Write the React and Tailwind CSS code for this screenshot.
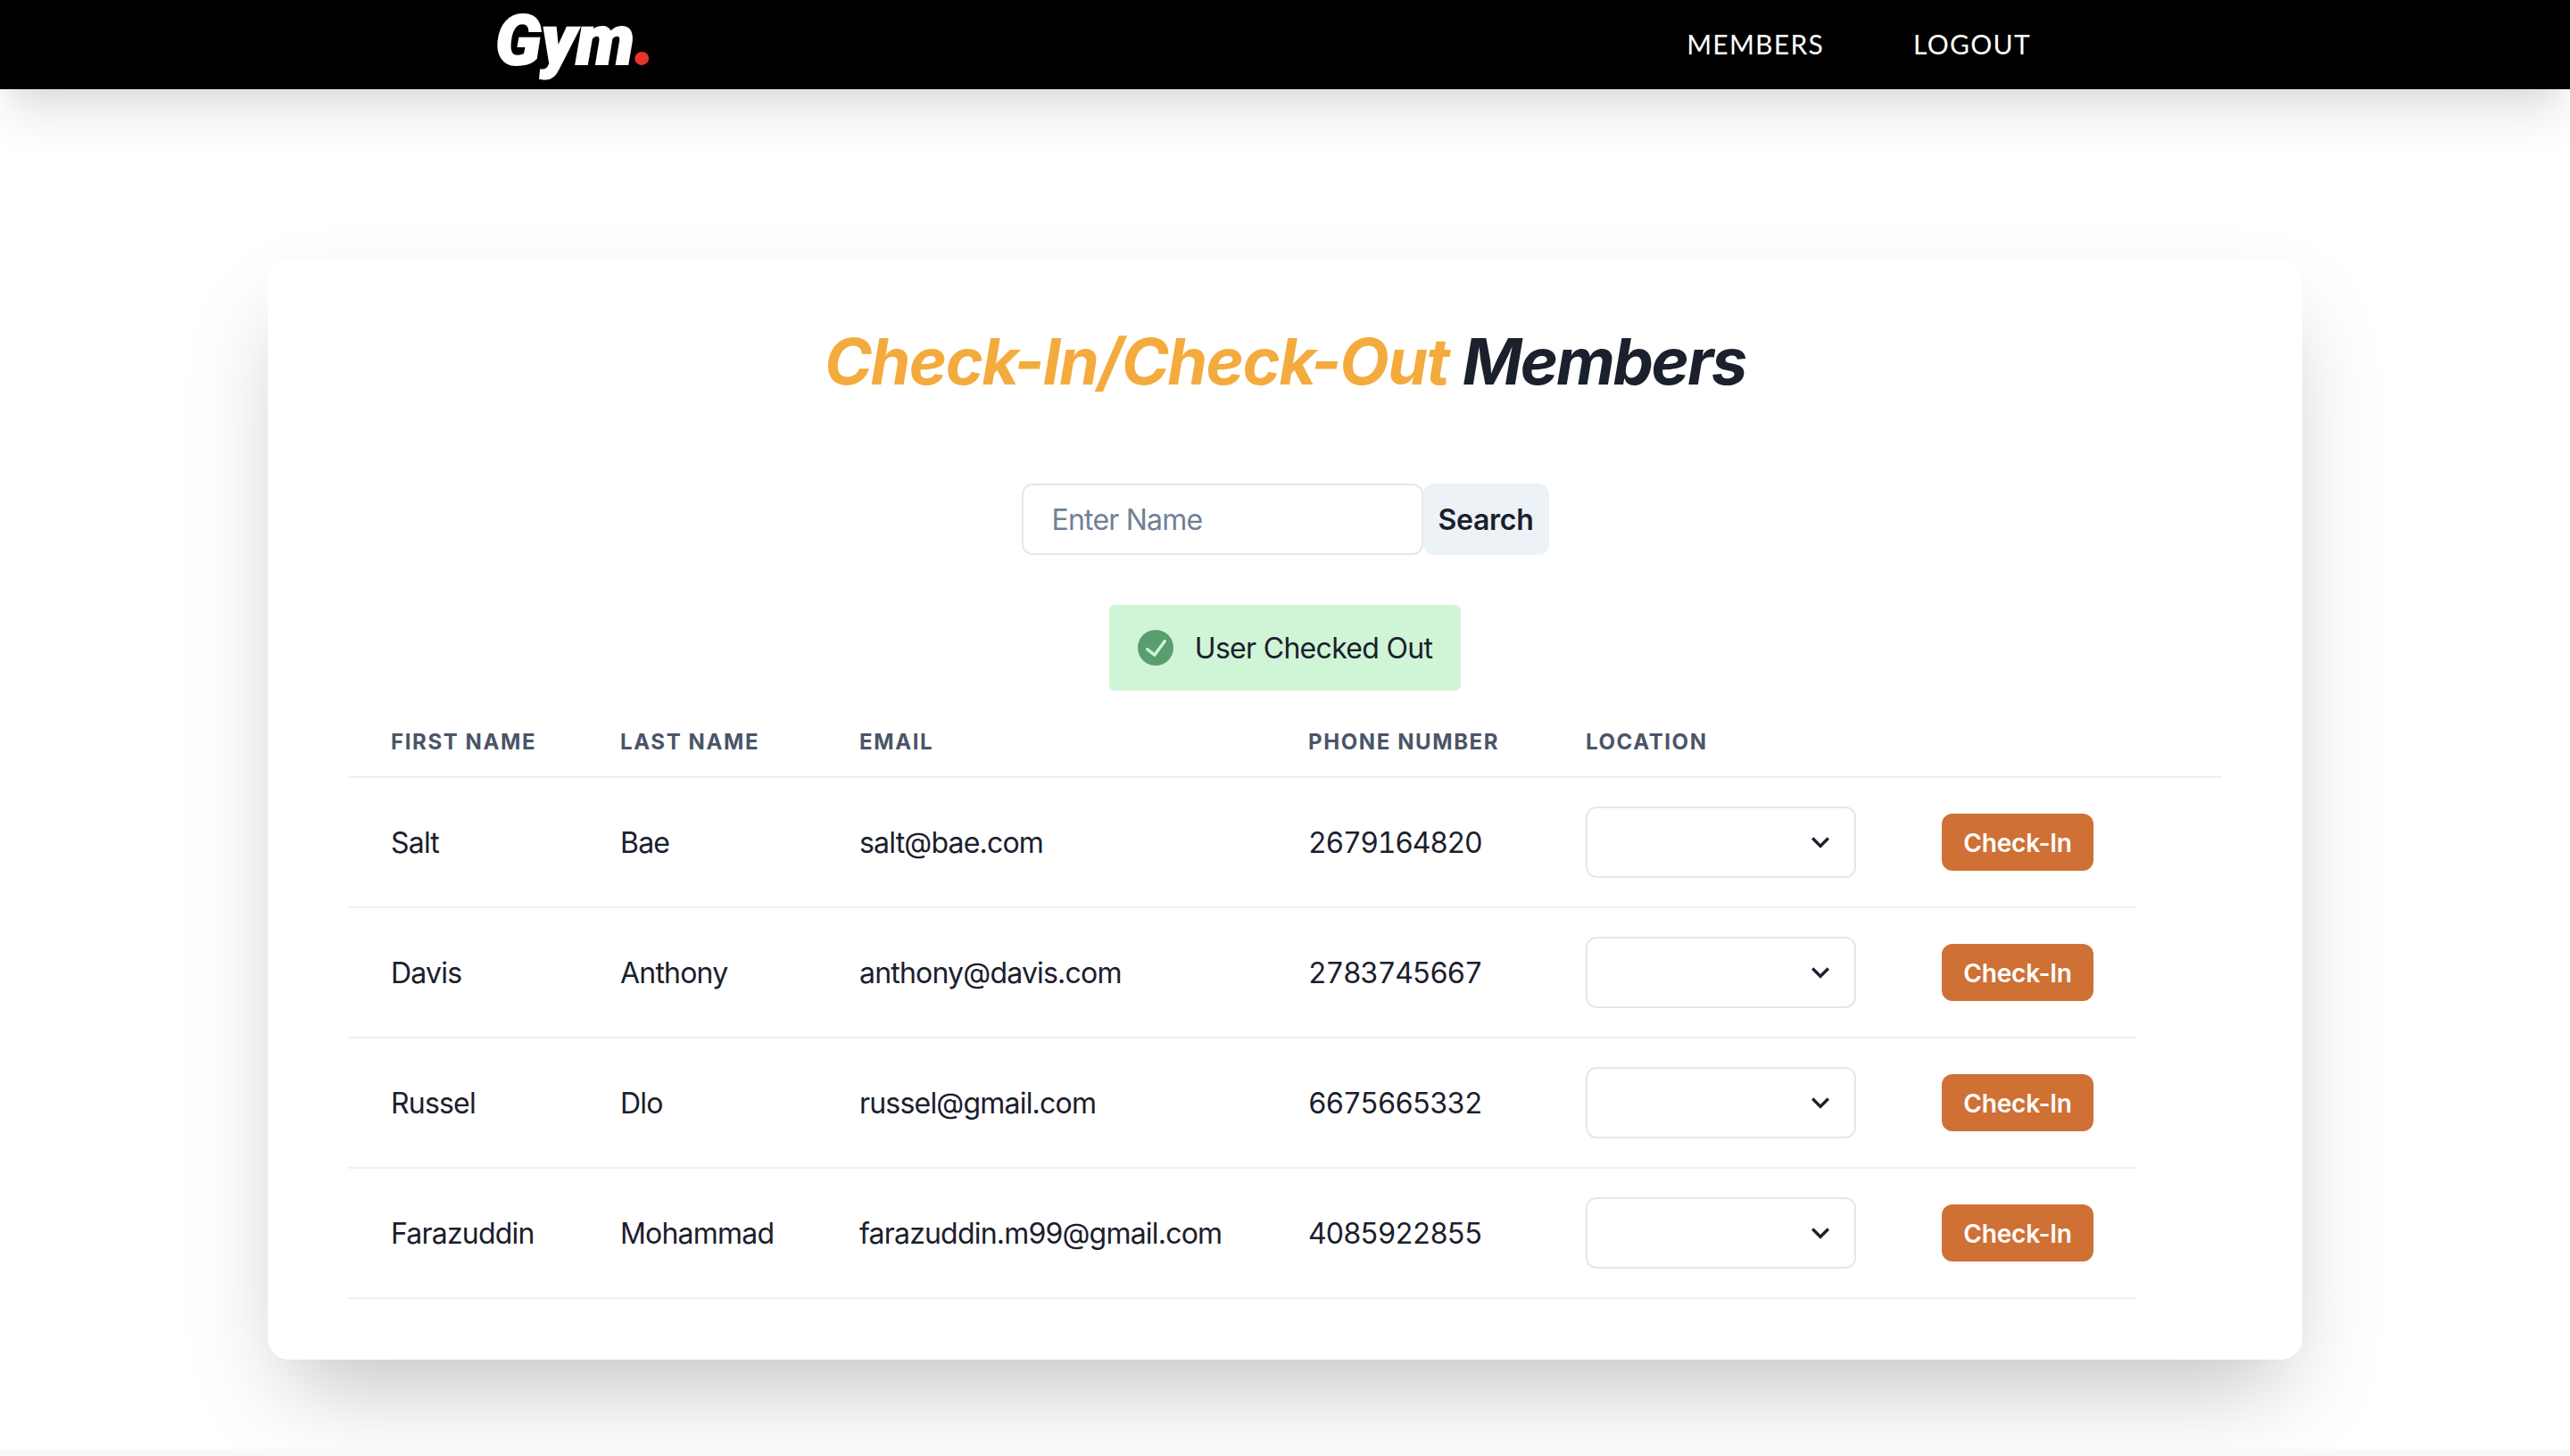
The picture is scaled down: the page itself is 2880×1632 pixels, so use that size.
const MEMBERS = [
  { first: 'Salt', last: 'Bae', email: 'salt@bae.com', phone: '2679164820' },
  { first: 'Davis', last: 'Anthony', email: 'anthony@davis.com', phone: '2783745667' },
  { first: 'Russel', last: 'Dlo', email: 'russel@gmail.com', phone: '6675665332' },
  { first: 'Farazuddin', last: 'Mohammad', email: 'farazuddin.m99@gmail.com', phone: '4085922855' },
]

const HEADERS = ['First Name', 'Last Name', 'Email', 'Phone Number', 'Location', '', '']
const COL_WIDTHS = ['w-[257px]', 'w-[268px]', 'w-[503px]', 'w-[311px]', 'w-[399px]', 'w-[266px]', 'w-[96px]']

function LocationSelect() {
  return (
    <div className="relative w-[303px] h-[80px]">
      <select className="w-full h-full appearance-none bg-white border-2 border-[#e2e8f0] rounded-[12px] px-[32px] text-[32px]" />
      <svg viewBox="0 0 24 24" className="absolute right-[20px] top-[20px] w-[40px] h-[40px] pointer-events-none" fill="#1a202c">
        <path d="M16.59 8.59L12 13.17 7.41 8.59 6 10l6 6 6-6z" />
      </svg>
    </div>
  )
}

export default function App() {
  return (
    <div className="min-h-[1632px] bg-[#f7f8fa] font-['Inter',sans-serif] text-[#1a202c]">
      <div className="h-[1624px] bg-white overflow-hidden">
        {/* nav */}
        <nav className="relative h-[100px] bg-black flex items-center justify-between pl-[555px] pr-[604px] shadow-[0_40px_50px_-10px_rgba(0,0,0,0.1),0_20px_20px_-10px_rgba(0,0,0,0.04)]">
          <div className="font-['Roboto',sans-serif] font-black italic text-[78px] leading-none text-white [-webkit-text-stroke:2px_currentColor] -mt-[8px]">
            Gym<span className="text-[#e8352b]">.</span>
          </div>
          <div className="flex gap-[100px] font-['Lato',sans-serif] text-[30px] text-white tracking-[1.3px] -mt-[2px]">
            <a>MEMBERS</a>
            <a>LOGOUT</a>
          </div>
        </nav>

        {/* card */}
        <div className="mt-[190px] mx-[300px] h-[1234px] bg-white rounded-[24px] pt-[65px] px-[90px] shadow-[0_50px_100px_-24px_rgba(0,0,0,0.25)]">
          <h1 className="text-center text-[72px] leading-[100px] font-bold italic tracking-[-1.6px]">
            <span className="text-[#f4ab3e]">Check-In/Check-Out</span> <span className="tracking-[-2.2px]">Members</span>
          </h1>

          <div className="flex justify-center mt-[87px]">
            <input
              placeholder="Enter Name"
              className="w-[450px] h-[80px] border-2 border-[#e2e8f0] rounded-[12px] px-[32px] pt-[1px] text-[32px] tracking-[-0.8px] placeholder:text-[#718096] outline-none"
            />
            <button className="w-[141px] h-[80px] bg-[#edf2f7] rounded-[12px] text-[32px] font-semibold tracking-[-0.3px] pt-[1px]">Search</button>
          </div>

          <div className="flex justify-center mt-[56px]">
            <div className="flex items-center gap-[24px] h-[96px] px-[32px] bg-[#d0f5d6] rounded-[6px] text-[32px] tracking-[-0.7px]">
              <svg viewBox="0 0 24 24" className="w-[40px] h-[40px]" fill="#5a9e6f">
                <path d="M12,0A12,12,0,1,0,24,12,12.014,12.014,0,0,0,12,0Zm6.927,8.2-6.845,9.289a1.011,1.011,0,0,1-1.43.188L5.764,13.769a1,1,0,1,1,1.25-1.562l4.076,3.261,6.227-8.451A1,1,0,1,1,18.927,8.2Z" />
              </svg>
              <span className="pt-[2px]">User Checked Out</span>
            </div>
          </div>

          <table className="mt-[16px] w-[2100px] table-fixed border-collapse">
            <colgroup>
              {COL_WIDTHS.map((w, i) => (
                <col key={i} className={w} />
              ))}
            </colgroup>
            <thead>
              <tr>
                {HEADERS.map((h, i) => (
                  <th key={i} className="h-[81px] px-[48px] pt-[4px] text-left text-[24px] leading-[32px] font-bold uppercase tracking-[1.6px] text-[#4a5568] border-b-2 border-[#edf2f7] whitespace-nowrap">
                    {h}
                  </th>
                ))}
              </tr>
            </thead>
            <tbody>
              {MEMBERS.map((m) => (
                <tr key={m.email} className="text-[32px]">
                  <td className="h-[146px] px-[48px] pt-[2px] border-b-2 border-[#edf2f7] whitespace-nowrap tracking-[-0.8px]">{m.first}</td>
                  <td className="px-[48px] pt-[2px] border-b-2 border-[#edf2f7] whitespace-nowrap tracking-[-0.8px]">{m.last}</td>
                  <td className="px-[48px] pt-[2px] border-b-2 border-[#edf2f7] whitespace-nowrap tracking-[-0.8px]">{m.email}</td>
                  <td className="px-[48px] pt-[2px] border-b-2 border-[#edf2f7] whitespace-nowrap tabular-nums tracking-[-1.3px]">{m.phone}</td>
                  <td className="px-[48px] border-b-2 border-[#edf2f7]">
                    <LocationSelect />
                  </td>
                  <td className="px-[48px] border-b-2 border-[#edf2f7]">
                    <button className="w-[170px] h-[64px] pt-[2px] bg-[#cf7035] rounded-[12px] text-white text-[28px] font-semibold tracking-[-0.2px]">Check-In</button>
                  </td>
                </tr>
              ))}
            </tbody>
          </table>
        </div>
      </div>
    </div>
  )
}
